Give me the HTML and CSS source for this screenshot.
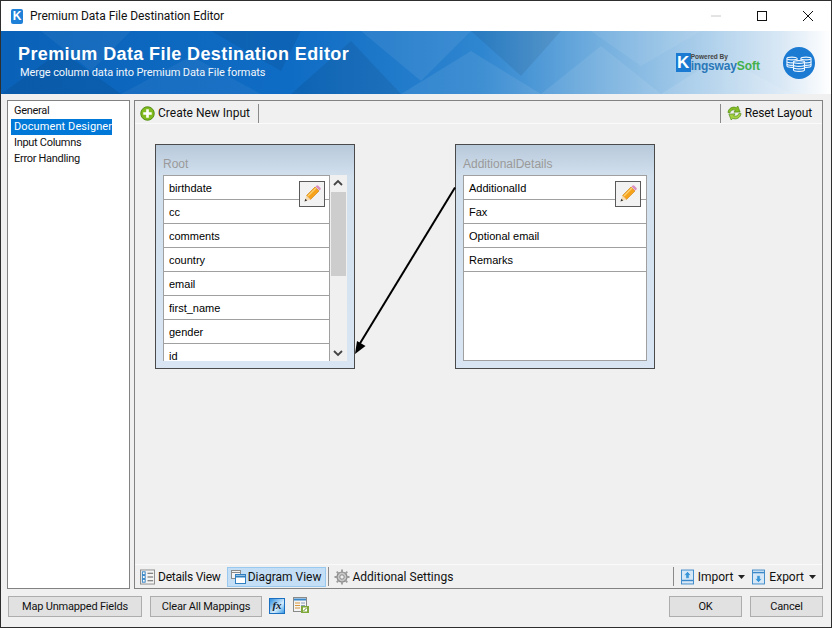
FILE: index.html
```html
<!DOCTYPE html>
<html lang="en">
<head>
<meta charset="utf-8">
<title>Premium Data File Destination Editor</title>
<link rel="stylesheet" href="styles.css">
</head>
<body>
<div class="window">
  <header class="titlebar">
    <span class="app-icon">K</span>
    <span class="title-text">Premium Data File Destination Editor</span>
    <div class="controls">
      <svg class="ctl" width="46" height="30" viewBox="0 0 46 30"><path d="M18 15h10" stroke="#c8c8c8" fill="none"/></svg>
      <svg class="ctl" width="46" height="30" viewBox="0 0 46 30"><rect x="18.5" y="10.5" width="9" height="9" stroke="#111" fill="none"/></svg>
      <svg class="ctl" width="46" height="30" viewBox="0 0 46 30"><path d="M18 10l10 10M28 10l-10 10" stroke="#111" fill="none"/></svg>
    </div>
  </header>

  <section class="banner">
    <svg class="banner-art" width="830" height="63" viewBox="0 0 830 63">
      <polygon points="0,63 60,20 120,63" fill="#000" opacity=".08"/>
      <polygon points="40,0 130,0 90,40" fill="#fff" opacity=".05"/>
      <polygon points="120,63 190,25 260,63" fill="#fff" opacity=".05"/>
      <polygon points="210,0 300,0 280,40" fill="#000" opacity=".07"/>
      <polygon points="290,63 350,10 400,63" fill="#000" opacity=".08"/>
      <polygon points="360,0 470,0 420,50" fill="#fff" opacity=".07"/>
      <polygon points="400,63 470,20 540,63" fill="#fff" opacity=".08"/>
      <polygon points="470,0 560,0 520,45" fill="#000" opacity=".07"/>
      <polygon points="540,63 600,15 660,63" fill="#fff" opacity=".08"/>
      <polygon points="590,0 700,0 640,35" fill="#fff" opacity=".07"/>
      <polygon points="660,63 720,25 790,63" fill="#fff" opacity=".1"/>
    </svg>
    <div class="banner-copy">
      <h1 class="banner-title">Premium Data File Destination Editor</h1>
      <p class="banner-sub">Merge column data into Premium Data File formats</p>
    </div>
    <div class="brand">
      <span class="brand-k">K</span>
      <div class="brand-words">
        <span class="brand-powered">Powered By</span>
        <span class="brand-name"><span class="brand-blue">ingsway</span><span class="brand-green">Soft</span></span>
      </div>
    </div>
    <div class="db-badge">
      <svg width="32" height="32" viewBox="0 0 32 32">
        <circle cx="16" cy="16" r="16" fill="#1b7ad2"/>
        <g fill="#1b7ad2" stroke="#f2f8ff" stroke-width="1.100">
          <path d="M4 11.500c0-1.800 10-1.800 10 0v7.500c0 1.800-10 1.800-10 0z"/>
          <path d="M18 11.500c0-1.800 10-1.800 10 0v7.500c0 1.800-10 1.800-10 0z"/>
          <path d="M4 11.500c0 1.800 10 1.800 10 0M4 14.500c0 1.800 10 1.800 10 0M4 17c0 1.800 10 1.800 10 0M18 11.500c0 1.800 10 1.800 10 0M18 14.500c0 1.800 10 1.800 10 0M18 17c0 1.800 10 1.800 10 0"/>
          <path d="M10.500 15c0-1.800 11-1.800 11 0v8c0 1.800-11 1.800-11 0z"/>
          <path d="M10.500 15c0 1.800 11 1.800 11 0M10.500 18c0 1.800 11 1.800 11 0M10.500 20.500c0 1.800 11 1.800 11 0"/>
        </g>
      </svg>
    </div>
  </section>

  <div class="content">
    <nav class="nav">
      <div class="nav-item">General</div>
      <div class="nav-item is-selected">Document Designer</div>
      <div class="nav-item">Input Columns</div>
      <div class="nav-item">Error Handling</div>
    </nav>

    <main class="panel">
      <div class="toolbar">
        <div class="tool">
          <svg width="15" height="15" viewBox="0 0 16 16">
            <circle cx="8" cy="8" r="7.200" fill="#82bb1f" stroke="#4f8a10"/>
            <path d="M8 3.500v9M3.500 8h9" stroke="#fff" stroke-width="2.800"/>
          </svg>
          <span>Create New Input</span>
        </div>
        <span class="sep sep-create"></span>
        <span class="spring"></span>
        <span class="sep sep-reset"></span>
        <div class="tool tool-reset">
          <svg width="15" height="16" viewBox="0 0 16 16">
            <path d="M1 7.500C1.500 3 6 .5 10 2.300L11.500 .5 14 6.800l-6.600.3 1.400-2C6.500 4 4 5 3 8z" fill="#86bd24" stroke="#4c8a12" stroke-width=".7"/>
            <path d="M15 8.500c-.5 4.500-5 7-9 5.200L4.500 15.500 2 9.200l6.600-.3-1.400 2c2.300 1.100 4.800.1 5.800-2.900z" fill="#a5d142" stroke="#4c8a12" stroke-width=".7"/>
          </svg>
          <span class="reset-label">Reset Layout</span>
        </div>
      </div>

      <div class="canvas">
        <section class="node node-root">
          <h2 class="node-title">Root</h2>
          <div class="node-body">
            <ul class="rows rows-scroll">
              <li class="row">birthdate</li>
              <li class="row">cc</li>
              <li class="row">comments</li>
              <li class="row">country</li>
              <li class="row">email</li>
              <li class="row">first_name</li>
              <li class="row">gender</li>
              <li class="row">id</li>
            </ul>
            <div class="scrollbar">
              <svg class="chev" width="16" height="16" viewBox="0 0 16 16"><path d="M4 10l4-4 4 4" stroke="#444" stroke-width="1.800" fill="none"/></svg>
              <div class="track"><div class="thumb"></div></div>
              <svg class="chev" width="16" height="16" viewBox="0 0 16 16"><path d="M4 6l4 4 4-4" stroke="#444" stroke-width="1.800" fill="none"/></svg>
            </div>
            <button class="edit edit-root" type="button" aria-label="Edit">
              <svg width="20" height="20" viewBox="0 0 20 20">
                <path d="M4.500 11.500L13 3l4 4-8.500 8.500z" fill="#f7a21b" stroke="#c97d10" stroke-width=".6"/>
                <path d="M6 12l8-8" stroke="#fbd070" stroke-width="1.200"/>
                <path d="M13.500 2.500l.8-.8a1.400 1.400 0 0 1 2 0l2 2a1.400 1.400 0 0 1 0 2l-.8.8z" fill="#d98cc0"/>
                <path d="M4.500 11.500L2.500 17.500l6-2z" fill="#f6dcb0"/>
                <path d="M2.500 17.500l.9-2.700 1.800 1.800z" fill="#333"/>
              </svg>
            </button>
          </div>
        </section>

        <section class="node node-details">
          <h2 class="node-title">AdditionalDetails</h2>
          <div class="node-body">
            <ul class="rows">
              <li class="row">AdditionalId</li>
              <li class="row">Fax</li>
              <li class="row">Optional email</li>
              <li class="row">Remarks</li>
            </ul>
            <button class="edit edit-details" type="button" aria-label="Edit">
              <svg width="20" height="20" viewBox="0 0 20 20">
                <path d="M4.500 11.500L13 3l4 4-8.500 8.500z" fill="#f7a21b" stroke="#c97d10" stroke-width=".6"/>
                <path d="M6 12l8-8" stroke="#fbd070" stroke-width="1.200"/>
                <path d="M13.500 2.500l.8-.8a1.400 1.400 0 0 1 2 0l2 2a1.400 1.400 0 0 1 0 2l-.8.8z" fill="#d98cc0"/>
                <path d="M4.500 11.500L2.500 17.500l6-2z" fill="#f6dcb0"/>
                <path d="M2.500 17.500l.9-2.700 1.800 1.800z" fill="#333"/>
              </svg>
            </button>
          </div>
        </section>

        <svg class="link" width="120" height="180" viewBox="0 0 120 180">
          <path d="M110 3.500L14 161" stroke="#000" stroke-width="2" fill="none"/>
          <path d="M10 170l2-13 8.500 5z" fill="#000"/>
        </svg>
      </div>

      <div class="tabs">
        <div class="tab tab-details">
          <svg width="15" height="16" viewBox="0 0 16 16">
            <rect x=".5" y=".5" width="15" height="15" fill="#f4f4f4" stroke="#8a8a8a"/>
            <path d="M8 4h6M8 8h6M8 12h6" stroke="#555"/>
            <rect x="2.500" y="2.500" width="3" height="3" fill="#fff" stroke="#2d7fc1"/>
            <rect x="2.500" y="6.500" width="3" height="3" fill="#fff" stroke="#2d7fc1"/>
            <rect x="2.500" y="10.500" width="3" height="3" fill="#fff" stroke="#2d7fc1"/>
          </svg>
          <span>Details View</span>
        </div>
        <div class="tab is-active">
          <svg width="16" height="16" viewBox="0 0 16 16">
            <rect x="1.500" y="1.500" width="9" height="8" fill="#f4f4f4" stroke="#8a8a8a"/>
            <path d="M2 3.500h8" stroke="#8a8a8a"/>
            <rect x="5.500" y="5.500" width="10" height="9" fill="#fff" stroke="#2f7fc0"/>
            <path d="M6 7.500h9" stroke="#2f7fc0" stroke-width="2"/>
          </svg>
          <span>Diagram View</span>
        </div>
        <span class="sep"></span>
        <div class="tab tab-settings">
          <svg width="16" height="16" viewBox="0 0 16 16">
            <circle cx="8" cy="8" r="5" fill="#c8c8c8" stroke="#8a8a8a" stroke-width="1.200"/>
            <circle cx="8" cy="8" r="2.200" fill="#f0f0f0" stroke="#8a8a8a"/>
            <path d="M8 .5v3M8 12.500v3M.5 8h3M12.500 8h3M2.700 2.700l2.100 2.100M11.200 11.200l2.100 2.100M13.300 2.700l-2.100 2.100M4.800 11.200l-2.100 2.100" stroke="#9a9a9a" stroke-width="1.800"/>
          </svg>
          <span>Additional Settings</span>
        </div>
        <span class="spring"></span>
        <span class="sep sep-io"></span>
        <div class="tab tab-io">
          <svg width="13" height="16" viewBox="0 0 14 16">
            <rect x=".5" y=".5" width="13" height="15" fill="#d6e8f7" stroke="#3a88c8"/>
            <rect x="1" y="11" width="12" height="1.500" fill="#3a88c8"/>
            <path d="M7 2L3 6h2.200v3.500h3.600V6H11z" fill="#3a96d8" stroke="#fff" stroke-width=".5"/>
          </svg>
          <span>Import</span>
          <svg class="caret" width="7" height="4" viewBox="0 0 7 4"><path d="M0 0h7L3.500 4z" fill="#222"/></svg>
        </div>
        <div class="tab tab-io">
          <svg width="13" height="16" viewBox="0 0 14 16">
            <rect x=".5" y=".5" width="13" height="15" fill="#d6e8f7" stroke="#3a88c8"/>
            <rect x="1" y="2.500" width="12" height="1.500" fill="#3a88c8"/>
            <path d="M7 14l4-4H8.800V6.500H5.200V10H3z" fill="#3a96d8" stroke="#fff" stroke-width=".5"/>
          </svg>
          <span>Export</span>
          <svg class="caret" width="7" height="4" viewBox="0 0 7 4"><path d="M0 0h7L3.500 4z" fill="#222"/></svg>
        </div>
      </div>
    </main>
  </div>

  <footer class="footer">
    <button class="btn btn-map" type="button">Map Unmapped Fields</button>
    <button class="btn btn-clear" type="button">Clear All Mappings</button>
    <span class="fx-icon">fx</span>
    <svg class="grid-icon" width="16" height="18" viewBox="0 0 16 18">
      <rect x=".5" y=".5" width="13" height="14" fill="#f4f4f4" stroke="#8a8a8a"/>
      <path d="M1 2.500h12" stroke="#3a88c8" stroke-width="2"/>
      <path d="M2 6h5M2 8.500h5M2 11h5" stroke="#d9953a"/>
      <path d="M8 6h4M8 8.500h4" stroke="#8aa0b5"/>
      <rect x="8" y="9" width="8" height="7" fill="#7fa83a"/>
      <rect x="10" y="10.500" width="4" height="4" fill="#fff"/>
      <path d="M10.500 14l3-3" stroke="#5f8a20"/>
    </svg>
    <span class="spring"></span>
    <button class="btn btn-ok" type="button">OK</button>
    <button class="btn btn-cancel" type="button">Cancel</button>
  </footer>
</div>
</body>
</html>
```

FILE: styles.css
```css
* { box-sizing: border-box; }
html, body { margin: 0; padding: 0; }
body {
  width: 832px;
  height: 628px;
  overflow: hidden;
  font-family: "Roboto", "Liberation Sans", sans-serif;
  font-size: 12px;
  color: #111;
  background: #f0f0f0;
}
ul, h1, h2, p { margin: 0; padding: 0; }
.window {
  width: 832px;
  height: 628px;
  border: 1px solid #2e2e2e;
  display: flex;
  flex-direction: column;
  background: #f0f0f0;
}
.spring { flex: 1; }

/* Title bar */
.titlebar {
  height: 30px;
  background: #fff;
  display: flex;
  align-items: center;
  padding-left: 10px;
  flex: none;
}
.app-icon {
  width: 12px;
  height: 15px;
  border-radius: 2px;
  background: #1f80d8;
  color: #fff;
  font: bold 12px/15px "Liberation Sans", sans-serif;
  text-align: center;
  margin-right: 7px;
}
.title-text { font-size: 12px; color: #111; letter-spacing: -0.05px; }
.controls { margin-left: auto; display: flex; }
.ctl { display: block; }

/* Banner */
.banner {
  position: relative;
  height: 63px;
  flex: none;
  display: flex;
  align-items: center;
  overflow: hidden;
  background: linear-gradient(90deg, #0a62b8 0%, #0f6cc4 35%, #2f86d0 58%, #72aede 72%, #a9cdea 84%, #d9e8f5 94%, #ffffff 100%);
}
.banner-art { position: absolute; left: 0; top: 0; }
.banner-copy { position: relative; padding-left: 17px; margin-top: -2px; }
.banner-title {
  font: bold 18px/22px "Liberation Sans", sans-serif;
  letter-spacing: 0.39px;
  color: #fff;
}
.banner-sub {
  font: 11px/14px "Roboto", sans-serif;
  letter-spacing: -0.1px;
  color: #f2f7fc;
  padding: 1px 0 0 2px;
}
.brand {
  position: relative;
  margin-left: auto;
  display: flex;
  align-items: flex-start;
}
.brand-k {
  width: 15px;
  height: 19px;
  background: #1b7ad2;
  color: #fff;
  font: bold 17px/19px "Liberation Sans", sans-serif;
  text-align: center;
}
.brand-words { display: flex; flex-direction: column; }
.brand-powered {
  font: bold 6.5px/7px "Liberation Sans", sans-serif;
  color: #444;
}
.brand-name { font: bold 12px/13px "Liberation Sans", sans-serif; white-space: nowrap; }
.brand-blue { color: #2a78b8; letter-spacing: -0.2px; }
.brand-green { color: #43b04a; }
.db-badge {
  position: relative;
  width: 32px;
  height: 32px;
  margin: 0 16px 0 23px;
}
.db-badge svg { display: block; }

/* Content */
.content {
  flex: none;
  height: 495px;
  display: flex;
  gap: 4px;
  padding: 6px 8px 0 6px;
}
.nav {
  width: 123px;
  background: #fff;
  border: 1px solid #828282;
  padding: 2px 3px;
  font-size: 11px;
  letter-spacing: -0.3px;
}
.nav-item {
  height: 16px;
  line-height: 16px;
  padding-left: 3px;
  width: 101px;
  white-space: nowrap;
}
.nav-item.is-selected { background: #0078d7; color: #fff; letter-spacing: 0.1px; }

.panel {
  flex: 1;
  border: 1px solid #828282;
  display: flex;
  flex-direction: column;
  min-width: 0;
}
.toolbar {
  height: 23px;
  flex: none;
  display: flex;
  align-items: center;
  padding: 2px 0 0 5px;
  border-bottom: 1px solid #fafafa;
}
.tool { display: flex; align-items: center; gap: 3px; }
.tool svg { display: block; flex: none; }
.tool-reset { margin: 0 10px 0 6px; }
.reset-label { letter-spacing: -0.15px; }
.sep {
  width: 1px;
  height: 19px;
  background: #8a8a8a;
  flex: none;
}
.sep-create { margin-left: 8px; }

/* Diagram */
.canvas { position: relative; flex: 1; min-height: 0; }
.node {
  position: absolute;
  top: 20px;
  width: 200px;
  height: 225px;
  border: 1px solid #4a4a4a;
  padding: 0 7px 7px;
  background: linear-gradient(180deg, #b8c9da 0%, #d2e0ee 14%, #d9e5f2 100%);
  display: flex;
  flex-direction: column;
}
.node-root { left: 20px; }
.node-details { left: 320px; }
.node-title {
  height: 30px;
  font: 12px/38px "Liberation Sans", sans-serif;
  color: #9a9a9a;
}
.node-body { position: relative; flex: 1; display: flex; min-height: 0; background: #f0f0f0; }
.rows {
  flex: 1;
  list-style: none;
  background: #fff;
  border: 1px solid #a0a0a0;
  overflow: hidden;
  font: 11px/25px "Liberation Sans", sans-serif;
  color: #000;
}
.rows-scroll { border-bottom: 0; }
.row {
  height: 24px;
  padding-left: 5px;
  border-bottom: 1px solid #a0a0a0;
}
.scrollbar { width: 17px; display: flex; flex-direction: column; flex: none; }
.chev { display: block; flex: none; }
.track { flex: 1; min-height: 0; }
.thumb { width: 15px; height: 84px; margin: 1px 0 0 1px; background: #cdcdcd; }
.edit {
  position: absolute;
  top: 6px;
  width: 26px;
  height: 26px;
  padding: 2px;
  border: 1px solid #5a5a5a;
  background: #f2f2f2;
}
.edit svg { display: block; }
.edit-root { right: 22px; }
.edit-details { right: 6px; }
.link { position: absolute; left: 210px; top: 60px; overflow: visible; }

/* Bottom tabs */
.tabs {
  height: 24px;
  flex: none;
  display: flex;
  align-items: center;
  padding: 2px 0 2px 5px;
  border-top: 1px solid #fafafa;
}
.tab {
  display: flex;
  align-items: center;
  gap: 3px;
  height: 20px;
  padding: 0 3px 0 0;
  margin-right: 3px;
}
.tab svg { display: block; flex: none; }
.tab-details { letter-spacing: -0.25px; }
.tab.is-active {
  background: #c4dff5;
  border: 1px solid #99c9ee;
  padding: 0 3px 0 2px;
  margin-right: 2px;
  gap: 2px;
}
.tab-settings { margin-left: 5px; }
.sep-io { margin-right: 7px; }
.tab-io { margin-right: 7px; padding: 0; gap: 4px; }
.tab-io:last-child { margin-right: 6px; }
.tab-io .caret { margin-left: 1px; }

/* Footer */
.footer {
  flex: 1;
  display: flex;
  align-items: center;
  gap: 8px;
  padding: 0 8px 4px 7px;
}
.btn {
  height: 21px;
  border: 1px solid #adadad;
  background: #e1e1e1;
  font: inherit;
  font-size: 11px;
  letter-spacing: -0.2px;
  color: #111;
  padding: 0;
}
.btn-map { width: 134px; }
.btn-clear { width: 112px; }
.btn-ok, .btn-cancel { width: 73px; }
.fx-icon {
  width: 16px;
  height: 16px;
  margin-left: -1px;
  background: linear-gradient(135deg, #2f8fe0, #d5ecfb 60%, #3b9be6);
  border: 1px solid #1b6fc0;
  font: italic bold 11px/13px "Liberation Serif", serif;
  text-align: center;
  color: #123;
}
.grid-icon { display: block; }
```
